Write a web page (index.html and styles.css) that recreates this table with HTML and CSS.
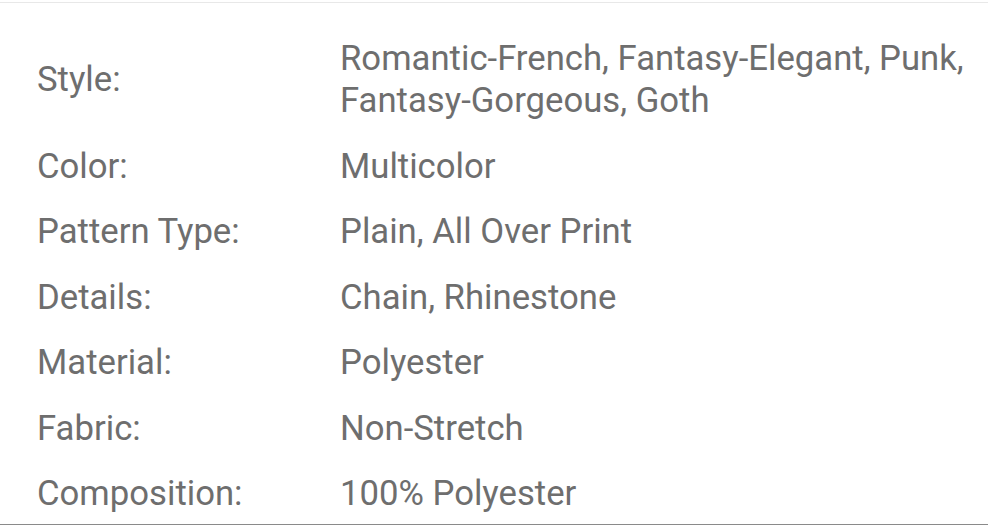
FILE: index.html
```html
<!DOCTYPE html>
<html lang="en">
<head>
<meta charset="utf-8">
<title>Product details</title>
<link rel="stylesheet" href="styles.css">
</head>
<body>
<div class="panel">
  <dl class="specs">
    <div class="row"><dt>Style:</dt><dd>Romantic-French, Fantasy-Elegant, Punk, Fantasy-Gorgeous, Goth</dd></div>
    <div class="row"><dt>Color:</dt><dd>Multicolor</dd></div>
    <div class="row"><dt>Pattern Type:</dt><dd>Plain, All Over Print</dd></div>
    <div class="row"><dt>Details:</dt><dd>Chain, Rhinestone</dd></div>
    <div class="row"><dt>Material:</dt><dd>Polyester</dd></div>
    <div class="row"><dt>Fabric:</dt><dd>Non-Stretch</dd></div>
    <div class="row"><dt>Composition:</dt><dd>100% Polyester</dd></div>
  </dl>
</div>
</body>
</html>
```
FILE: styles.css
```css
html, body {
  margin: 0;
  padding: 0;
  background: #fff;
}
body {
  width: 988px;
  height: 525px;
  overflow: hidden;
  font-family: Roboto, "Noto Sans", sans-serif;
  color: #6e6e6e;
}
.panel {
  margin-top: 2px;
  width: 988px;
  height: 523px;
  border-top: 1px solid #e8e8e8;
  border-bottom: 1px solid #8a8a8a;
  box-sizing: border-box;
}
.specs {
  margin: 0;
  padding: 22px 18px 0 37px;
}
.row {
  display: grid;
  grid-template-columns: 303px 1fr;
  align-items: center;
  padding: 12px 0 11.5px;
}
dt, dd {
  margin: 0;
  font-size: 34.7px;
  line-height: 42px;
}
```
